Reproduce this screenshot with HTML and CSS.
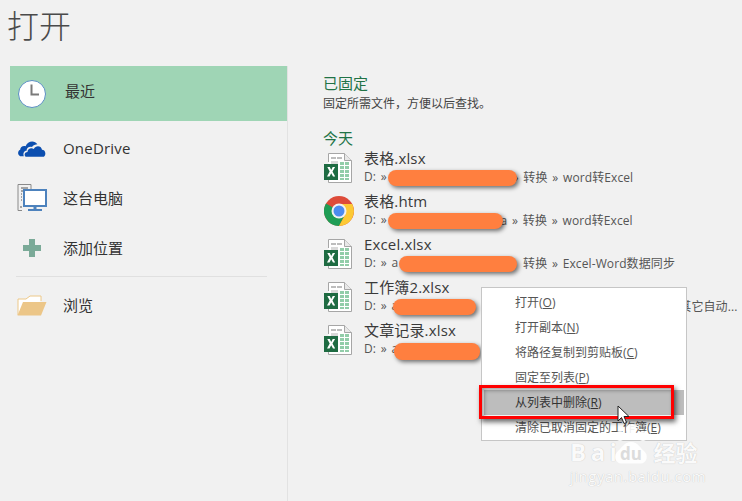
FILE: index.html
```html
<!DOCTYPE html>
<html lang="zh">
<head>
<meta charset="utf-8">
<title>打开</title>
<link rel="stylesheet" href="styles.css">
</head>
<body>
<svg class="defs" width="0" height="0">
  <defs>
    <symbol id="xl" viewBox="0 0 30 32">
      <path d="M4.500 10V1.500H20.500L27.500 8.500V30.500H4.500V26" fill="#fff" stroke="#a6a6a6" stroke-width="1"/>
      <path d="M20.500 1.500V8.500H27.500" fill="#e8e8e8" stroke="#a6a6a6" stroke-width="1"/>
      <path d="M7 5h5v2H7zM13 5h5v2h-5z" fill="#bdbdbd"/>
      <path d="M16 10h4v3h-4zM21 10h4v3h-4zM16 14h4v3h-4zM21 14h4v3h-4zM16 18h4v3h-4zM21 18h4v3h-4zM16 22h4v3h-4zM21 22h4v3h-4zM16 26h4v2h-4zM21 26h4v2h-4z" fill="#92cda9"/>
      <path d="M7 9h7v3H7z" fill="#d9d9d9"/>
      <rect x="0" y="12" width="14" height="16" fill="#1e6b42"/>
      <path d="M3.300 15h2.500l1.400 3 1.500-3h2.400l-2.600 4.500 2.700 5H9l-1.800-3.300-1.700 3.300H3l2.700-5z" fill="#fff"/>
    </symbol>
  </defs>
</svg>

<div class="app">
  <aside class="side">
    <h1 class="title">打开</h1>
    <nav class="nav">
      <a class="nav-item active">
        <span class="icon-box"><svg width="30" height="30" viewBox="0 0 30 30"><circle cx="15" cy="15" r="13.500" fill="#fff" stroke="#5b8ec4" stroke-width="1"/><path d="M14.500 5.500V15.500H22" fill="none" stroke="#7a7a7a" stroke-width="2"/></svg></span>
        <span class="label first">最近</span>
      </a>
      <a class="nav-item">
        <span class="icon-box"><svg width="30" height="20" viewBox="0 0 32 22"><path d="M3 20C0 19 0 14 3 13C3 10 6 8 9 9C11 3 19 2 22 7C20 7 17 8 16 10C13 9 10 11 10 14C7 14 6 17 7 20z" fill="#0c4fb0"/><path d="M9 20.500C7 19 8 15.500 11 15.500C11 12 15 10 18 12C20 8 26 8 27 13C31 13 32 19 29 20.500z" fill="#0c4fb0"/></svg></span>
        <span class="label">OneDrive</span>
      </a>
      <a class="nav-item">
        <span class="icon-box"><svg width="30" height="30" viewBox="0 0 30 30"><path d="M5 27.500H1V1.500H14V6" fill="none" stroke="#8a8a8a" stroke-width="1"/><path d="M4 5h7M4 8h5M4 11h1M4 14h1M4 17h1M3 24h2" stroke="#8a8a8a" stroke-width="1.500" fill="none"/><rect x="7" y="7" width="22" height="16" fill="#fff" stroke="#4d82bd" stroke-width="2"/><path d="M16.500 23h3v3h-3zM11 26h14v2H11z" fill="#4d82bd"/></svg></span>
        <span class="label zh">这台电脑</span>
      </a>
      <a class="nav-item">
        <span class="icon-box"><svg width="18" height="18" viewBox="0 0 18 18"><path d="M6 0h6v6h6v6h-6v6H6v-6H0V6h6z" fill="#7baa98"/></svg></span>
        <span class="label zh">添加位置</span>
      </a>
      <div class="sep"></div>
      <a class="nav-item">
        <span class="icon-box"><svg width="30" height="22" viewBox="0 0 30 22"><path d="M1 21V5H9L13 2H24V7" fill="#fff" stroke="#edc888" stroke-width="1"/><path d="M6 8H29.500L24 21.500H0.500z" fill="#ecc688"/></svg></span>
        <span class="label zh">浏览</span>
      </a>
    </nav>
  </aside>

  <main class="main">
    <h2 class="sect">已固定</h2>
    <p class="hint">固定所需文件，方便以后查找。</p>
    <h2 class="sect today">今天</h2>
    <ul class="files">
      <li class="file">
        <svg class="file-icon" width="30" height="32"><use href="#xl"/></svg>
        <div class="file-text"><div class="name">表格.xlsx</div><div class="path">D: » <i class="blob b1"></i>» 转换 » word转Excel</div></div>
      </li>
      <li class="file">
        <svg class="file-icon chrome" width="30" height="30" viewBox="0 0 30 30"><circle cx="15" cy="15" r="15" fill="#dd4b39"/><path d="M15 15L2 7.500A15 15 0 0 0 15 30L22 17z" fill="#1f9d55"/><path d="M15 8H28.200A15 15 0 0 1 15 30L22 17z" fill="#fcc934"/><circle cx="15" cy="15" r="7.500" fill="#f1f1f1"/><circle cx="15" cy="15" r="5.500" fill="#4b8bf0"/></svg>
        <div class="file-text"><div class="name">表格.htm</div><div class="path">D: » <i class="blob b2"></i>a » 转换 » word转Excel</div></div>
      </li>
      <li class="file">
        <svg class="file-icon" width="30" height="32"><use href="#xl"/></svg>
        <div class="file-text"><div class="name">Excel.xlsx</div><div class="path">D: » a<i class="blob b3"></i> 转换 » Excel-Word数据同步</div></div>
      </li>
      <li class="file">
        <svg class="file-icon" width="30" height="32"><use href="#xl"/></svg>
        <div class="file-text"><div class="name">工作簿2.xlsx</div><div class="path">D: » a<i class="blob b4"></i><span class="far">其它自动...</span></div></div>
      </li>
      <li class="file">
        <svg class="file-icon" width="30" height="32"><use href="#xl"/></svg>
        <div class="file-text"><div class="name">文章记录.xlsx</div><div class="path">D: » a<i class="blob b5"></i></div></div>
      </li>
    </ul>
  </main>
</div>

<ul class="menu">
  <li>打开(<u>O</u>)</li>
  <li>打开副本(<u>N</u>)</li>
  <li>将路径复制到剪贴板(<u>C</u>)</li>
  <li>固定至列表(<u>P</u>)</li>
  <li class="hot">从列表中删除(<u>R</u>)</li>
  <li>清除已取消固定的工作簿(<u>E</u>)</li>
</ul>
<div class="redbox"></div>
<svg class="cursor" width="13" height="20" viewBox="0 0 13 20"><path d="M1 1V16L4.500 12.500L7 18.500L9.500 17.500L7 11.500H12z" fill="#fff" stroke="#222" stroke-width="1"/></svg>
<div class="mark">
  <div class="mark-top">
    <span class="mark-bai">Bai</span>
    <svg class="paw" width="38" height="44" viewBox="0 0 38 44">
      <circle cx="8" cy="14" r="5"/><circle cx="19" cy="7" r="5"/><circle cx="31" cy="14" r="5"/>
      <path d="M19 20C26 20 28 26 32 29C37 33 35 42 28 41.500H10C3 42 1 33 6 29C10 26 12 20 19 20z"/>
      <text class="paw-text" x="19" y="38" text-anchor="middle">du</text>
    </svg>
    <span class="mark-cn">经验</span>
  </div>
  <div class="mark-sub">jingyan.baidu.com</div>
</div>
</body>
</html>
```

FILE: styles.css
```css
* { box-sizing: border-box; }
html, body { margin: 0; height: 100%; }
body {
  width: 742px; height: 501px; overflow: hidden; position: relative;
  background: #f1f1f1; color: #333;
  font-family: "Open Sans", "Noto Sans CJK SC", sans-serif;
}
.defs { position: absolute; }
.app { display: flex; height: 501px; }
.side { width: 288px; flex: none; }
.title {
  margin: 0; height: 66px; padding: 4px 0 0 7px;
  font-size: 32px; line-height: 44px; font-weight: 300; color: #4a4a4a;
}
.nav { margin-left: 10px; height: 435px; border-right: 1px solid #e2e2e2; }
.nav-item { display: flex; align-items: center; height: 50px; }
.nav-item.active { height: 55px; background: #9fd5b5; margin-bottom: 2px; }
.icon-box { flex: none; display: flex; justify-content: center; width: 44px; margin-right: 9px; }
.label { font-size: 15px; color: #333; letter-spacing: .2px; }
.label.zh { letter-spacing: 0; padding-bottom: 2px; }
.label.first { margin-left: 2px; letter-spacing: 0; padding-bottom: 7px; }
.sep { height: 1px; width: 251px; margin: 3px 0 3px 6px; background: #e0e0e0; }
.main { flex: 1; min-width: 0; padding: 73px 0 0 35px; }
.sect { margin: 0; font-size: 15px; line-height: 20px; font-weight: 400; color: #217346; }
.hint { margin: 1px 0 0; font-size: 12px; line-height: 20px; color: #444; }
.today { margin-top: 14px; }
.files { list-style: none; margin: 0; padding: 0; }
.file { display: flex; height: 43px; }
.file-icon { flex: none; margin: 4px 0 0 1px; }
.file-icon.chrome { margin-top: 5px; }
.file-text { margin-left: 10px; white-space: nowrap; }
.name { font-size: 15px; line-height: 20px; letter-spacing: .15px; color: #3a3a3a; }
.path { display: flex; align-items: center; height: 17px; font-size: 12px; letter-spacing: .1px; word-spacing: 1.500px; color: #555; white-space: pre; }
.blob {
  display: inline-block; height: 16px; margin-top: 3px; border-radius: 8px; background: #ff7f3f;
  box-shadow: 2px 2px 4px rgba(0,0,0,.55); flex: none; position: relative;
}
.b1 { width: 129px; margin-left: -4px; margin-right: -4px; }
.b2 { width: 115px; margin-left: -4px; margin-right: -2px; }
.b3 { width: 118px; margin-left: 1px; margin-right: 1px; }
.b4 { width: 83px; margin-left: -5px; margin-right: 203px; }
.b5 { width: 86px; height: 17px; margin-top: 5px; margin-left: -4px; }
.menu {
  position: absolute; left: 481px; top: 287px; width: 206px; height: 154px;
  margin: 0; padding: 2px; list-style: none;
  background: #fff; border: 1px solid #c6c6c6;
}
.menu li { height: 25px; line-height: 25px; padding-left: 31px; font-size: 12px; color: #555; }
.menu li.hot { background: #bdbdbd; color: #333; }
.redbox {
  position: absolute; left: 479px; top: 385px; width: 195px; height: 34px;
  border: 3px solid #f00; box-shadow: 2px 3px 5px rgba(0,0,0,.6), inset 2px 2px 4px rgba(0,0,0,.4);
}
.cursor { position: absolute; left: 617px; top: 405px; }
.mark { position: absolute; left: 570px; top: 422px; color: rgba(255,255,255,.95); text-shadow: 0 0 1px rgba(0,0,0,.25); }
.mark-top { display: flex; align-items: flex-end; height: 44px; white-space: nowrap; }
.mark-bai { font-size: 24px; line-height: 22px; padding-bottom: 3px; font-weight: 700; letter-spacing: 4.500px; }
.paw { flex: none; margin: 0 3px 0 -9px; fill: rgba(255,255,255,.9); }
.paw-text { font-size: 17px; font-weight: 700; fill: #dcdcdc; text-shadow: none; }
.mark-cn { font-size: 22px; line-height: 22px; padding-bottom: 3px; font-weight: 700; }
.mark-sub { font-size: 15px; line-height: 16px; margin-top: 2px; white-space: nowrap; letter-spacing: .5px; }
```
